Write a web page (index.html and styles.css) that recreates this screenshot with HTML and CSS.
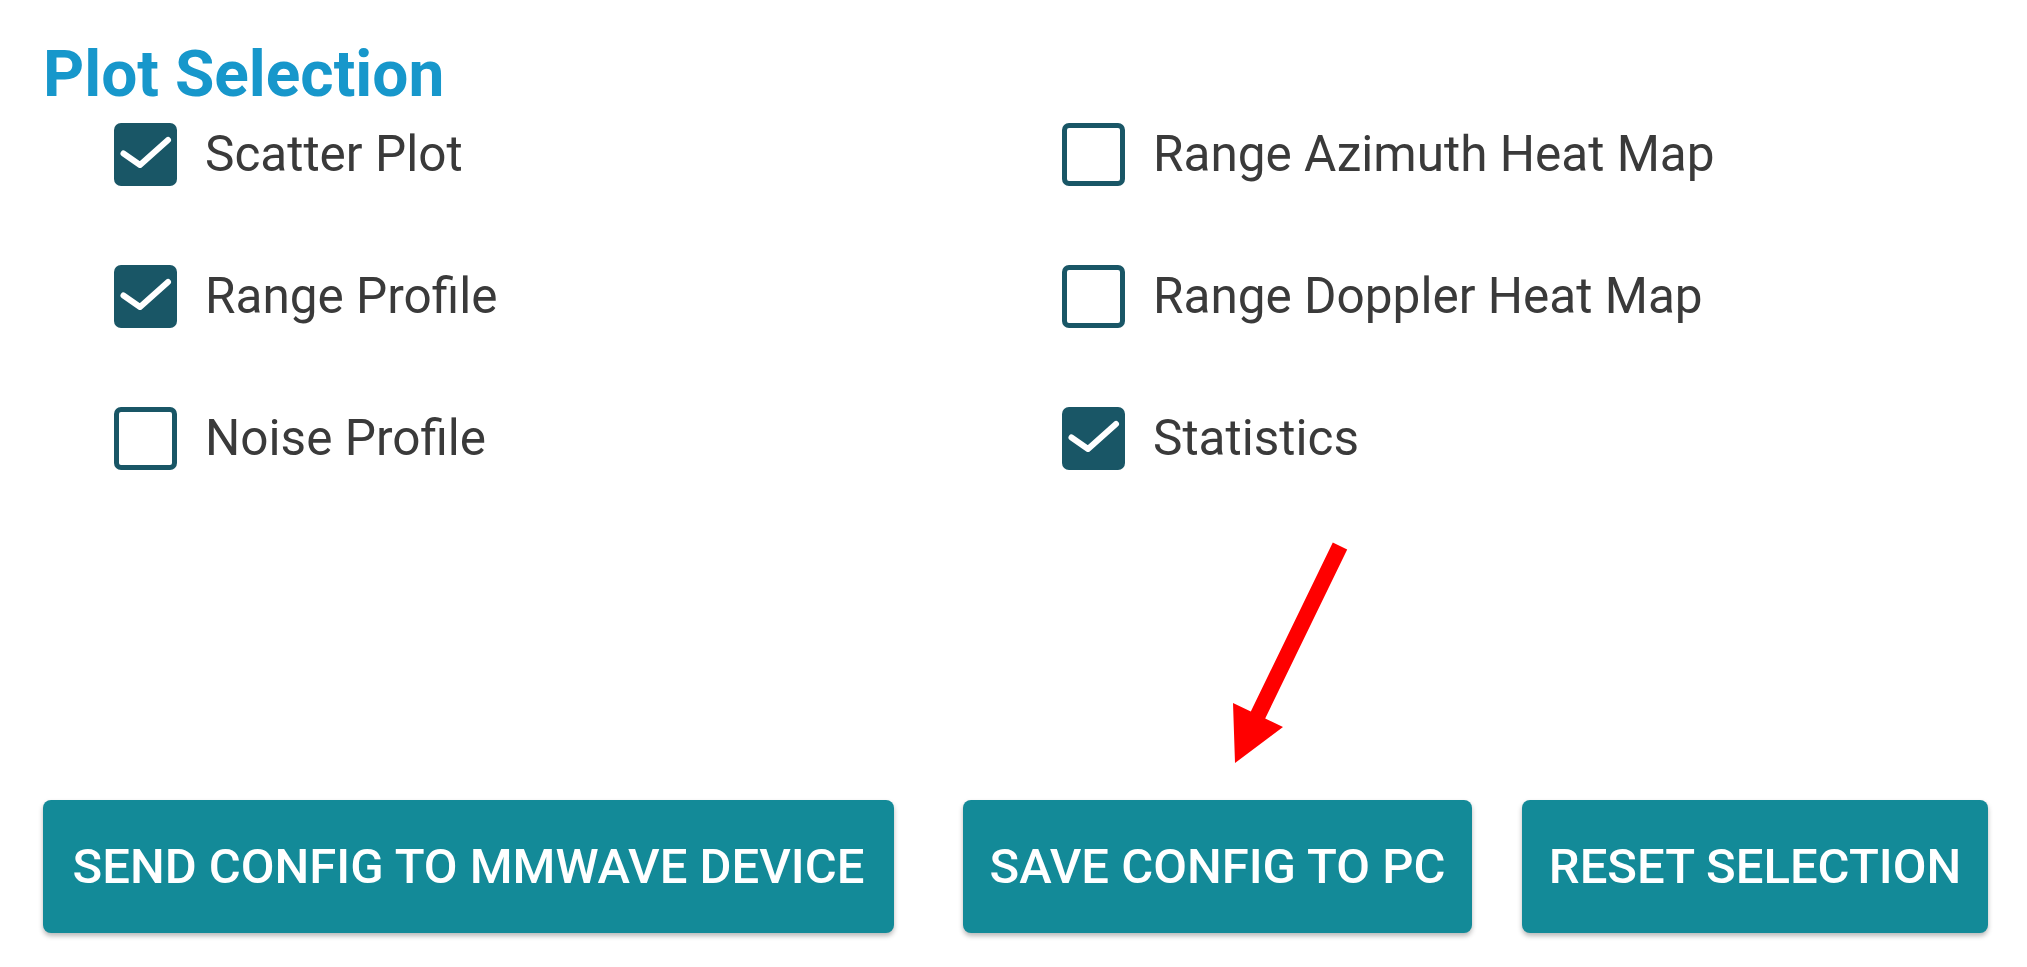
FILE: index.html
```html
<!DOCTYPE html>
<html lang="en">
<head>
<meta charset="utf-8">
<title>Plot Selection</title>
<link rel="stylesheet" href="styles.css">
</head>
<body>
<div class="page">
  <h1 class="title">Plot Selection</h1>
  <div class="options">
    <label class="option">
      <span class="box checked"><svg viewBox="0 0 63 63"><polyline points="9.5,30.5 26,42 54,17"/></svg></span>
      <span class="label">Scatter Plot</span>
    </label>
    <label class="option">
      <span class="box"></span>
      <span class="label">Range Azimuth Heat Map</span>
    </label>
    <label class="option">
      <span class="box checked"><svg viewBox="0 0 63 63"><polyline points="9.5,30.5 26,42 54,17"/></svg></span>
      <span class="label">Range Profile</span>
    </label>
    <label class="option">
      <span class="box"></span>
      <span class="label">Range Doppler Heat Map</span>
    </label>
    <label class="option">
      <span class="box"></span>
      <span class="label">Noise Profile</span>
    </label>
    <label class="option">
      <span class="box checked"><svg viewBox="0 0 63 63"><polyline points="9.5,30.5 26,42 54,17"/></svg></span>
      <span class="label">Statistics</span>
    </label>
  </div>
  <div class="actions">
    <button class="btn btn-send">SEND CONFIG TO MMWAVE DEVICE</button>
    <button class="btn btn-save">SAVE CONFIG TO PC</button>
    <button class="btn btn-reset">RESET SELECTION</button>
  </div>
  <svg class="arrow" viewBox="0 0 140 240" width="140" height="240">
    <polygon points="112.8,7.5 127.2,14.5 45.2,183.5 63,192 15,228 13,168 30.8,176.5"/>
  </svg>
</div>
</body>
</html>
```

FILE: styles.css
```css
* {
  box-sizing: border-box;
}

html, body {
  margin: 0;
  padding: 0;
  background: #ffffff;
}

body {
  font-family: Roboto, "Liberation Sans", Arial, sans-serif;
  width: 2027px;
  height: 967px;
  overflow: hidden;
}

.page {
  position: relative;
  width: 2027px;
  height: 967px;
  padding-top: 43px;
}

.title {
  margin: 0;
  padding-left: 43px;
  font-size: 64px;
  line-height: 64px;
  font-weight: 700;
  color: #1797cb;
}

.options {
  margin-top: 16px;
  padding-left: 114px;
  display: grid;
  grid-template-columns: 948px 1fr;
  row-gap: 79px;
}

.option {
  display: flex;
  align-items: center;
  height: 63px;
  gap: 28px;
}

.box {
  flex: 0 0 63px;
  width: 63px;
  height: 63px;
  border: 5px solid #195666;
  border-radius: 7px;
  background: #ffffff;
  display: flex;
}

.box.checked {
  background: #195666;
  border: none;
}

.box svg {
  width: 63px;
  height: 63px;
}

.box polyline {
  fill: none;
  stroke: #ffffff;
  stroke-width: 6;
  stroke-linecap: round;
  stroke-linejoin: round;
}

.label {
  font-size: 49.5px;
  line-height: 63px;
  font-weight: 400;
  color: #3a3a3a;
  white-space: nowrap;
}

.actions {
  margin-top: 330px;
  padding-left: 43px;
  display: flex;
  gap: 50px;
}

.btn {
  height: 133px;
  border: none;
  border-radius: 8px;
  background: #138a98;
  color: #ffffff;
  font-family: Roboto, "Liberation Sans", Arial, sans-serif;
  font-size: 49px;
  font-weight: 500;
  letter-spacing: 0;
  white-space: nowrap;
  padding: 0;
  display: flex;
  align-items: center;
  justify-content: center;
  box-shadow: 0 3px 5px rgba(0, 0, 0, 0.28);
}

.btn-send {
  width: 851px;
  margin-right: 19px;
}

.btn-save {
  width: 509px;
}

.btn-reset {
  width: 466px;
}

.arrow {
  position: absolute;
  left: 1220px;
  top: 535px;
}

.arrow polygon {
  fill: #ff0000;
}
```
